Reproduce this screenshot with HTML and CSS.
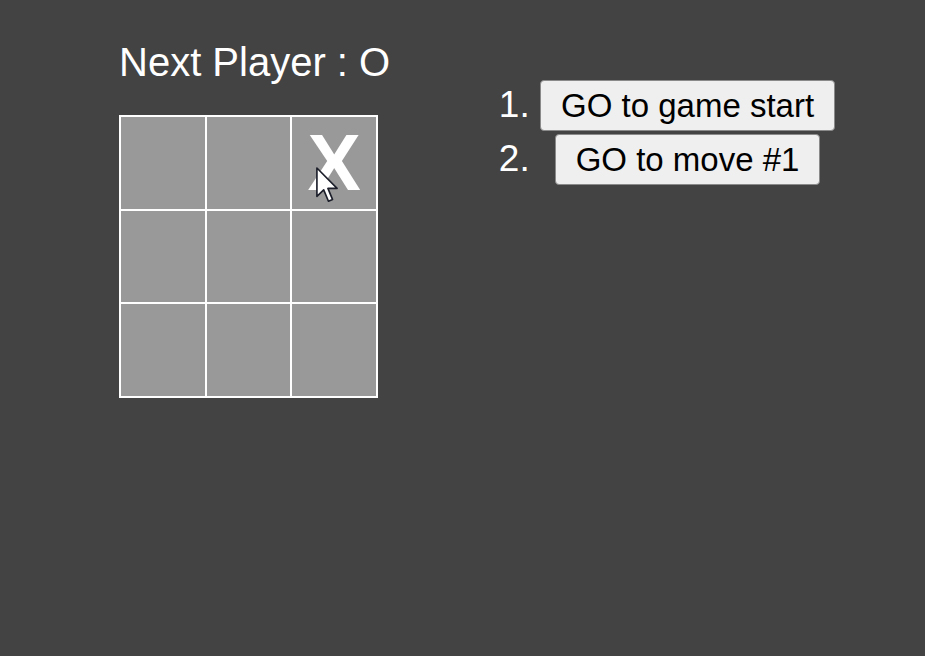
FILE: index.html
```html
<!DOCTYPE html>
<html>
<head>
<meta charset="utf-8">
<link rel="stylesheet" href="styles.css">
</head>
<body>
<div class="game">
  <div class="game-board">
    <div class="status">Next Player : O</div>
    <div class="board">
      <button class="square"></button>
      <button class="square"></button>
      <button class="square">X</button>
      <button class="square"></button>
      <button class="square"></button>
      <button class="square"></button>
      <button class="square"></button>
      <button class="square"></button>
      <button class="square"></button>
    </div>
  </div>
  <div class="game-info">
    <ol class="moves">
      <li><button class="move">GO to game start</button></li>
      <li><button class="move">GO to move #1</button></li>
    </ol>
  </div>
</div>
<svg class="cursor" width="22" height="36" viewBox="0 0 12 19.5">
  <path d="M0.5 0.5 L0.5 16 L4.2 12.4 L6.8 18.6 L9 17.6 L6.5 11.6 L11.5 11.6 Z" fill="#ffffff" stroke="#1c1f2a" stroke-width="0.9" stroke-linejoin="round"/>
</svg>
</body>
</html>
```
FILE: styles.css
```css
html, body {
  margin: 0;
  padding: 0;
  background: #434343;
  height: 100%;
}
body {
  font-family: "Liberation Sans", Arial, sans-serif;
  position: relative;
}
.game {
  display: flex;
  flex-direction: row;
  padding: 40px 0 0 119px;
}
.game-board {
  flex: none;
  width: 270px;
}
.status {
  color: #ffffff;
  font-size: 40px;
  line-height: 45px;
  white-space: nowrap;
  margin-bottom: 30px;
}
.board {
  display: grid;
  grid-template-columns: repeat(3, 1fr);
  grid-template-rows: repeat(3, 1fr);
  width: 257px;
  height: 281px;
  border: 1px solid #ffffff;
}
.square {
  background: #999999;
  border: 1px solid #ffffff;
  margin: 0;
  padding: 0;
  color: #ffffff;
  font-family: "Liberation Sans", Arial, sans-serif;
  font-weight: bold;
  font-size: 80px;
  line-height: 1;
  display: flex;
  align-items: center;
  justify-content: center;
}
.game-info {
  margin-left: 111px;
  margin-top: 40px;
}
.moves {
  margin: 0;
  padding-left: 40px;
  color: #ffffff;
  font-size: 32px;
}
.moves li {
  text-align: center;
  margin-bottom: 3px;
}
.moves li::marker {
  font-size: 37px;
}
.move {
  font-family: "Liberation Sans", Arial, sans-serif;
  font-size: 33px;
  line-height: 39px;
  color: #000000;
  background: #efefef;
  border: 1px solid #8a8a8a;
  border-radius: 4px;
  padding: 5px 20px;
  margin: 0;
}
.cursor {
  position: absolute;
  left: 316px;
  top: 167px;
}
```
